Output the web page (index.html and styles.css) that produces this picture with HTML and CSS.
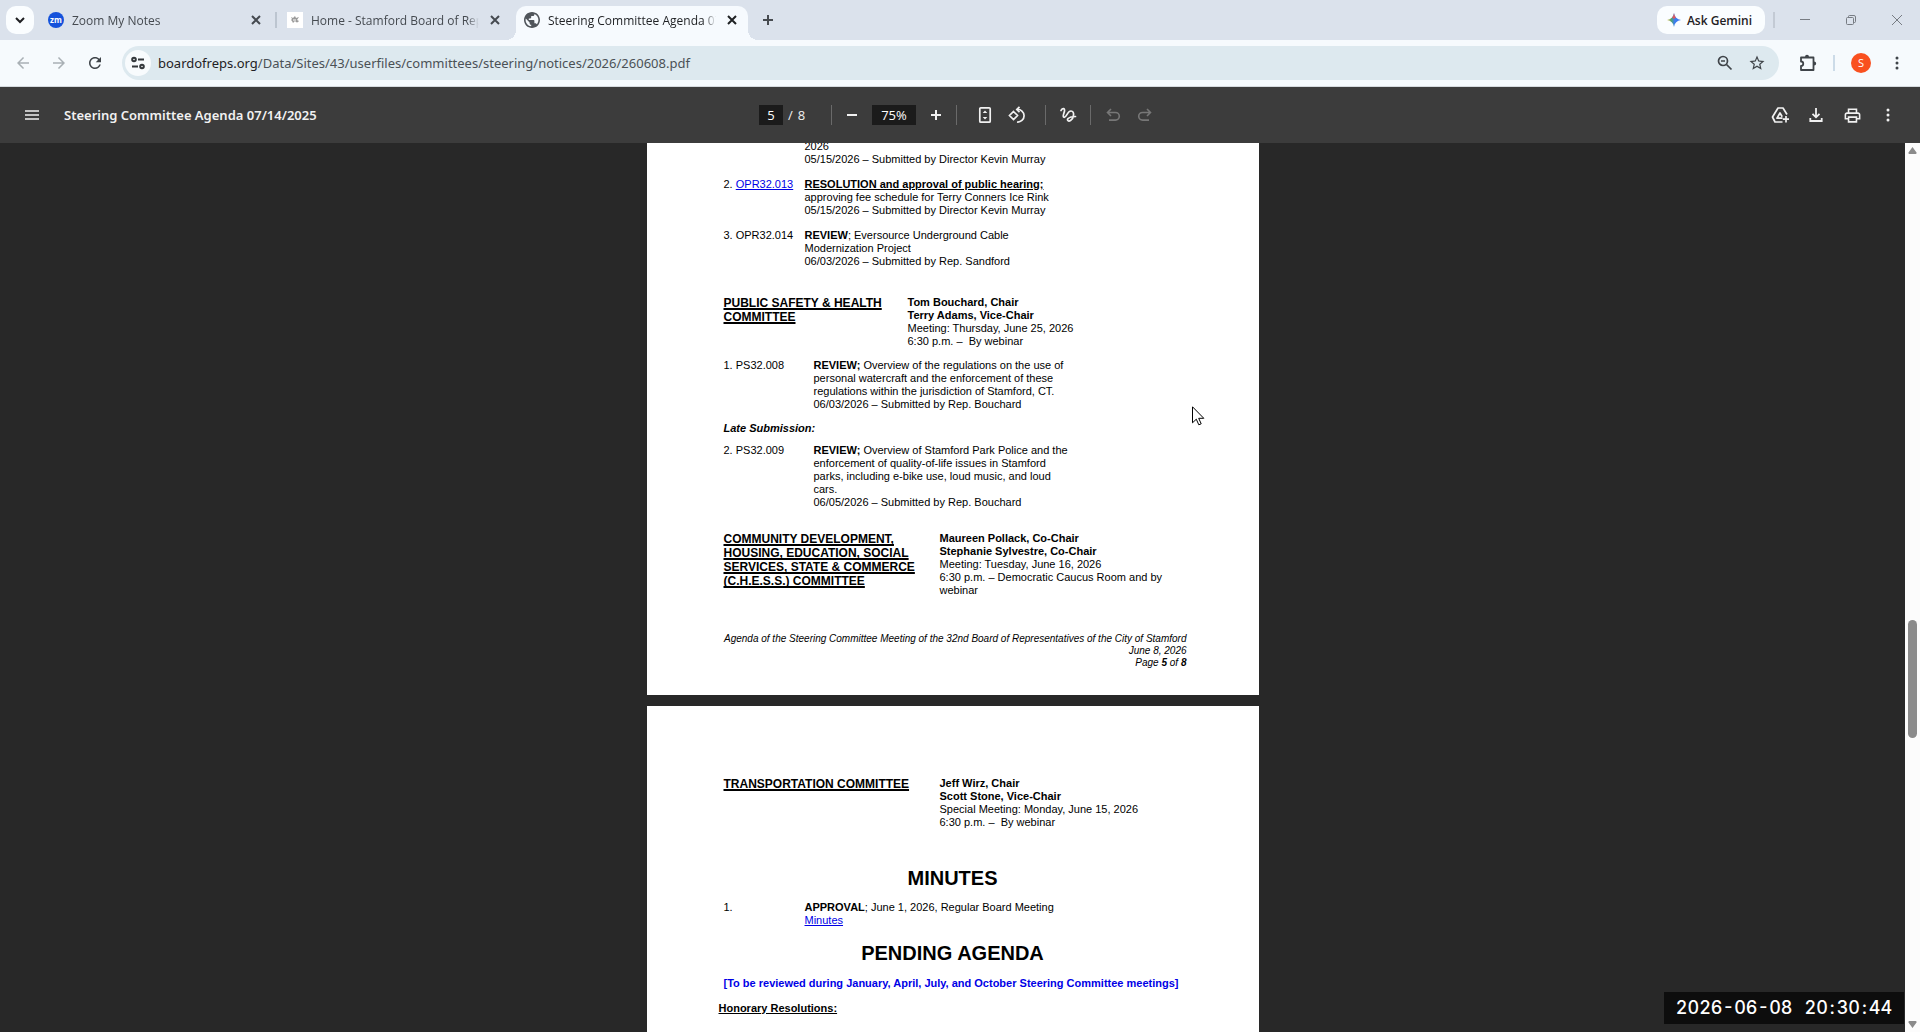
FILE: index.html
```html
<!DOCTYPE html>
<html lang="en">
<head>
<meta charset="utf-8">
<title>Steering Committee Agenda 07/14/2025</title>
<link rel="stylesheet" href="styles.css">
</head>
<body>
<header class="browser">
  <div class="tabstrip">
    <button class="tab-search" aria-label="Search tabs"><svg viewBox="0 0 16 16" width="16" height="16"><path d="M4 6l4 4 4-4" fill="none" stroke="#1f2023" stroke-width="2"/></svg></button>
    <div class="tab">
      <svg class="favicon" viewBox="0 0 16 16" width="16" height="16"><circle cx="8" cy="8" r="8" fill="#1552db"/><text x="8" y="11" text-anchor="middle" class="zm">zm</text></svg>
      <span class="tab-title">Zoom My Notes</span>
      <button class="tab-close" aria-label="Close tab"><svg viewBox="0 0 16 16" width="16" height="16"><path d="M4 4l8 8M12 4l-8 8" stroke="currentColor" stroke-width="2"/></svg></button>
    </div>
    <span class="tab-rule"></span>
    <div class="tab">
      <svg class="favicon" viewBox="0 0 16 16" width="16" height="16"><path d="M0 0h16v16H0z" fill="#fff"/><path d="M4 5l2 1 2-2 1 2 3-1-2 3 2 1-2 2-2-2-2 2-1-2-1-1 1-1z" fill="#9a9a9a"/><path d="M6 8h3M9 11h2" stroke="#fff"/></svg>
      <span class="tab-title">Home - Stamford Board of Representatives</span>
      <button class="tab-close" aria-label="Close tab"><svg viewBox="0 0 16 16" width="16" height="16"><path d="M4 4l8 8M12 4l-8 8" stroke="currentColor" stroke-width="2"/></svg></button>
    </div>
    <div class="tab tab-active">
      <svg class="favicon" viewBox="2 2 20 20" width="16" height="16"><path fill="#50555b" d="M12 2C6.480 2 2 6.480 2 12s4.480 10 10 10 10-4.480 10-10S17.520 2 12 2zm-1 17.930c-3.950-.49-7-3.850-7-7.930 0-.62.08-1.210.21-1.790L9 15v1c0 1.100.9 2 2 2v1.930zm6.900-2.540c-.26-.81-1-1.390-1.900-1.390h-1v-3c0-.55-.45-1-1-1H8v-2h2c.55 0 1-.45 1-1V7h2c1.100 0 2-.9 2-2v-.41c2.930 1.190 5 4.060 5 7.410 0 2.080-.8 3.970-2.100 5.390z"/></svg>
      <span class="tab-title">Steering Committee Agenda 07/14/2025</span>
      <button class="tab-close" aria-label="Close tab"><svg viewBox="0 0 16 16" width="16" height="16"><path d="M4 4l8 8M12 4l-8 8" stroke="currentColor" stroke-width="2"/></svg></button>
    </div>
    <button class="new-tab" aria-label="New tab"><svg viewBox="0 0 16 16" width="16" height="16"><path d="M8 3v10M3 8h10" stroke="#474b50" stroke-width="2"/></svg></button>
    <div class="window-side">
      <button class="gemini"><svg viewBox="0 0 16 16" width="16" height="16"><defs><linearGradient id="spark" x1="0" y1="0" x2="1" y2="0"><stop offset="0" stop-color="#e8b53a"/><stop offset=".3" stop-color="#4fa56c"/><stop offset=".55" stop-color="#3c7df0"/><stop offset="1" stop-color="#3876f2"/></linearGradient></defs><path d="M8 1c.6 4 3 6.400 7 7-4 .6-6.400 3-7 7-.6-4-3-6.400-7-7 4-.6 6.400-3 7-7z" fill="url(#spark)"/><path d="M8 1c.3 2 1 3.500 2 4.600L8 7 6 5.600C7 4.500 7.700 3 8 1z" fill="#db5a62"/></svg>Ask Gemini</button>
      <span class="side-rule"></span>
      <button class="win" aria-label="Minimize"><svg viewBox="0 0 12 12" width="12" height="12"><path d="M1 5.500h10" stroke="#777c83"/></svg></button>
      <button class="win" aria-label="Restore"><svg viewBox="0 0 12 12" width="12" height="12"><rect x="1.500" y="3.500" width="7" height="7" rx="1" fill="none" stroke="#777c83"/><path d="M3.500 3.500v-1a1 1 0 0 1 1-1H9a1.500 1.500 0 0 1 1.500 1.500v4.500a1 1 0 0 1-1 1h-1" fill="none" stroke="#777c83"/></svg></button>
      <button class="win" aria-label="Close"><svg viewBox="0 0 12 12" width="12" height="12"><path d="M1 1l10 10M11 1L1 11" stroke="#777c83"/></svg></button>
    </div>
  </div>
  <div class="navbar">
    <button class="nav nav-off" aria-label="Back"><svg viewBox="0 0 24 24" width="18" height="18"><path fill="currentColor" d="M20 11H7.830l5.590-5.590L12 4l-8 8 8 8 1.410-1.410L7.830 13H20v-2z"/></svg></button>
    <button class="nav nav-off" aria-label="Forward"><svg viewBox="0 0 24 24" width="18" height="18"><path fill="currentColor" d="M4 11h12.170l-5.590-5.590L12 4l8 8-8 8-1.410-1.410L16.170 13H4v-2z"/></svg></button>
    <button class="nav" aria-label="Reload"><svg viewBox="0 0 24 24" width="18" height="18"><path fill="currentColor" d="M17.650 6.350C16.200 4.900 14.210 4 12 4c-4.420 0-7.990 3.580-7.990 8s3.570 8 7.990 8c3.730 0 6.840-2.550 7.730-6h-2.080c-.82 2.330-3.040 4-5.650 4-3.310 0-6-2.690-6-6s2.690-6 6-6c1.660 0 3.140.69 4.220 1.780L13 11h7V4l-2.350 2.350z"/></svg></button>
    <div class="omnibox">
      <button class="site-info" aria-label="Site information"><svg viewBox="0 0 16 16" width="16" height="16" fill="none" stroke="#33373b" stroke-width="2"><circle cx="4" cy="4.500" r="1.800"/><path d="M8 4.500h6M2 11.500h6"/><circle cx="12" cy="11.500" r="1.800"/></svg></button>
      <a class="url" href="#"><span class="host">boardofreps.org</span>/Data/Sites/43/userfiles/committees/steering/notices/2026/260608.pdf</a>
      <button class="nav" aria-label="Zoom level"><svg viewBox="0 0 18 18" width="18" height="18" fill="none" stroke="currentColor" stroke-width="1.700"><circle cx="7" cy="7" r="4.500"/><path d="M10.500 10.500l5 5"/><path d="M5 7h4" stroke-width="1.500"/></svg></button>
      <button class="nav" aria-label="Bookmark this page"><svg viewBox="0 0 24 24" width="18" height="18"><path fill="currentColor" d="M22 9.240l-7.190-.62L12 2 9.190 8.630 2 9.240l5.460 4.730L5.820 21 12 17.270 18.180 21l-1.630-7.030L22 9.240zM12 15.400l-3.760 2.270 1-4.280-3.320-2.880 4.380-.38L12 6.100l1.710 4.040 4.380.38-3.320 2.880 1 4.280L12 15.400z"/></svg></button>
    </div>
    <button class="nav ext" aria-label="Extensions"><svg viewBox="0 0 18 18" width="18" height="18"><path d="M2 3.500h12.500v12.500H2v-4c3 0 3-4.500 0-4.500z" fill="none" stroke="currentColor" stroke-width="1.800" stroke-linejoin="round"/><path d="M6 3a2 2.200 0 0 1 4 0zM15 7.500a2.200 2 0 0 1 0 4z" fill="currentColor"/></svg></button>
    <span class="nav-rule"></span>
    <button class="avatar" aria-label="Profile">S</button>
    <button class="nav" aria-label="Menu"><svg viewBox="0 0 18 18" width="18" height="18" fill="currentColor"><circle cx="9" cy="4" r="1.500"/><circle cx="9" cy="9" r="1.500"/><circle cx="9" cy="14" r="1.500"/></svg></button>
  </div>
</header>

<div class="pdf-bar">
  <div class="bar-left">
    <button class="tool" aria-label="Menu"><svg viewBox="0 0 16 16" width="16" height="16"><path d="M1 4h14M1 8h14M1 12h14" stroke="currentColor" stroke-width="1.400"/></svg></button>
    <h1 class="doc-title">Steering Committee Agenda 07/14/2025</h1>
  </div>
  <div class="bar-mid">
    <div class="pager"><input class="field field-page" aria-label="Page number" value="5"><span>/</span><span>8</span></div>
    <span class="rule rule-page"></span>
    <button class="tool" aria-label="Zoom out"><svg viewBox="0 0 16 16" width="16" height="16"><path d="M3 8h10" stroke="currentColor" stroke-width="2"/></svg></button>
    <input class="field field-zoom" aria-label="Zoom level" value="75%">
    <button class="tool" aria-label="Zoom in"><svg viewBox="0 0 16 16" width="16" height="16"><path d="M3 8h10M8 3v10" stroke="currentColor" stroke-width="2"/></svg></button>
    <span class="rule rule-zoom"></span>
    <button class="tool" aria-label="Fit to page"><svg viewBox="0 0 18 18" width="18" height="18"><rect x="3.800" y="1.800" width="10.400" height="14.400" rx="1" fill="none" stroke="currentColor" stroke-width="1.700"/><path d="M9 4.500l2.300 2.500H6.700zM9 13.500l2.300-2.500H6.700z" fill="currentColor"/></svg></button>
    <button class="tool" aria-label="Rotate"><svg viewBox="0 0 18 18" width="18" height="18" fill="none" stroke="currentColor" stroke-width="1.700"><path d="M5.500 5.500L9.500 9.500l-4 4-4-4zM9 3.500a6.300 6.300 0 1 1 0 12.500"/><path d="M11.500 .8L8.800 3.500l2.700 2.700"/></svg></button>
    <span class="rule rule-rotate"></span>
    <button class="tool" aria-label="Draw"><svg viewBox="0 0 18 18" width="18" height="18" fill="none" stroke="currentColor" stroke-width="1.700" stroke-linecap="round"><path d="M2 4.500C3.500 2 6 2 5.500 5 5 8 3 10.500 5 11.300c2.500.8 3-6.300 7-6.300 4 0 3 7-.5 9.500-2 1.300-4-.2-2.500-1.800 1.700-1.700 4.500-2.200 7.500-2.200"/></svg></button>
    <span class="rule rule-draw"></span>
    <button class="tool tool-off" aria-label="Undo"><svg viewBox="0 0 18 18" width="18" height="18" fill="none" stroke="currentColor" stroke-width="1.600"><path d="M7 3L3.500 6.500 7 10M4 6.500h7.500a3.800 3.800 0 0 1 0 7.600H5"/></svg></button>
    <button class="tool tool-off" aria-label="Redo"><svg viewBox="0 0 18 18" width="18" height="18" fill="none" stroke="currentColor" stroke-width="1.600"><path d="M11 3l3.500 3.500L11 10M14 6.500H6.500a3.800 3.800 0 0 0 0 7.600H13"/></svg></button>
  </div>
  <div class="bar-right">
    <button class="tool" aria-label="Save to Drive"><svg viewBox="0 0 18 18" width="18" height="18" fill="none" stroke="currentColor" stroke-width="1.700" stroke-linejoin="round"><path d="M16 8.500L12 2H7L1.500 11 4 16h7.500"/><path d="M11.500 12.200H6L9 7l2.200 3.800"/><path d="M15 10v6.500M11.800 13.200h6.200"/></svg></button>
    <button class="tool" aria-label="Download"><svg viewBox="0 0 16 16" width="16" height="16" fill="none" stroke="currentColor" stroke-width="1.800"><path d="M8 1v9M4.500 6.800L8 10.300l3.500-3.500M2.300 11v3h11.400v-3"/></svg></button>
    <button class="tool" aria-label="Print"><svg viewBox="0 0 24 24" width="19" height="19"><path fill="currentColor" d="M19 8h-1V3H6v5H5c-1.660 0-3 1.340-3 3v6h4v4h12v-4h4v-6c0-1.660-1.340-3-3-3zM8 5h8v3H8V5zm8 12v2H8v-4h8v2zm2-2v-2H6v2H4v-4c0-.55.45-1 1-1h14c.55 0 1 .45 1 1v4h-2z"/></svg></button>
    <button class="tool" aria-label="More actions"><svg viewBox="0 0 18 18" width="18" height="18" fill="currentColor"><circle cx="9" cy="4" r="1.500"/><circle cx="9" cy="9" r="1.500"/><circle cx="9" cy="14" r="1.500"/></svg></button>
  </div>
</div>

<div class="viewer">
  <main class="pages">
    <article class="page page-five">
      <div class="item item-first"><span></span><p>2026<br>05/15/2026 – Submitted by Director Kevin Murray</p></div>
      <div class="item"><span>2. <a class="link" href="#">OPR32.013</a></span><p><b class="under">RESOLUTION and approval of public hearing;</b> approving fee schedule for Terry Conners Ice Rink<br>05/15/2026 – Submitted by Director Kevin Murray</p></div>
      <div class="item"><span>3. OPR32.014</span><p><b>REVIEW</b>; Eversource Underground Cable Modernization Project<br>06/03/2026 – Submitted by Rep. Sandford</p></div>

      <section class="committee committee-safety">
        <h2>PUBLIC SAFETY &amp; HEALTH COMMITTEE</h2>
        <p><b>Tom Bouchard, Chair<br>Terry Adams, Vice-Chair</b><br>Meeting: Thursday, June 25, 2026<br>6:30 p.m. –&nbsp; By webinar</p>
      </section>
      <div class="item item-wide"><span>1. PS32.008</span><p><b>REVIEW;</b> Overview of the regulations on the use of personal watercraft and the enforcement of these regulations within the jurisdiction of Stamford, CT.<br>06/03/2026 – Submitted by Rep. Bouchard</p></div>
      <h3 class="late">Late Submission:</h3>
      <div class="item item-wide item-late"><span>2. PS32.009</span><p><b>REVIEW;</b> Overview of Stamford Park Police and the enforcement of quality-of-life issues in Stamford parks, including e-bike use, loud music, and loud cars.<br>06/05/2026 – Submitted by Rep. Bouchard</p></div>

      <section class="committee committee-chess">
        <h2>COMMUNITY DEVELOPMENT, HOUSING, EDUCATION, SOCIAL SERVICES, STATE &amp; COMMERCE (C.H.E.S.S.) COMMITTEE</h2>
        <p><b>Maureen Pollack, Co-Chair<br>Stephanie Sylvestre, Co-Chair</b><br>Meeting: Tuesday, June 16, 2026<br>6:30 p.m. – Democratic Caucus Room and by webinar</p>
      </section>
      <footer class="page-foot">Agenda of the Steering Committee Meeting of the 32nd Board of Representatives of the City of Stamford<br>June 8, 2026<br>Page <b>5</b> of <b>8</b></footer>
    </article>

    <article class="page page-six">
      <section class="committee">
        <h2>TRANSPORTATION COMMITTEE</h2>
        <p><b>Jeff Wirz, Chair<br>Scott Stone, Vice-Chair</b><br>Special Meeting: Monday, June 15, 2026<br>6:30 p.m. –&nbsp; By webinar</p>
      </section>
      <h2 class="title title-minutes">MINUTES</h2>
      <div class="item item-minutes"><span>1.</span><p><b>APPROVAL</b>; June 1, 2026, Regular Board Meeting <a class="link" href="#">Minutes</a></p></div>
      <h2 class="title title-pending">PENDING AGENDA</h2>
      <p class="notice">[To be reviewed during January, April, July, and October Steering Committee meetings]</p>
      <h3 class="honorary">Honorary Resolutions:</h3>
    </article>
  </main>
  <div class="scrollbar">
    <svg viewBox="0 0 15 15" width="15" height="15"><path d="M7.500 4L11.500 9.500a1 1 0 0 1-1 1.500h-6a1 1 0 0 1-1-1.500z" fill="#8b8b8b"/></svg>
    <div class="track"><span class="thumb"></span></div>
    <svg viewBox="0 0 15 15" width="15" height="15"><path d="M7.500 11L11.500 5.500a1 1 0 0 0-1-1.500h-6a1 1 0 0 0-1 1.500z" fill="#8b8b8b"/></svg>
  </div>
</div>

<svg class="pointer" viewBox="0 0 13 20" width="13" height="20"><path d="M.5 .8v16l3.800-3.600 2.500 5.600 2.400-1-2.500-5.500h5.100z" fill="#fff" stroke="#000"/></svg>
<time class="stamp"><span>2026-06-08</span><span>20<i>:</i>30<i>:</i>44</span></time>
</body>
</html>
```
FILE: styles.css
```css
* { box-sizing: border-box; }
html, body { height: 100%; }
body {
  margin: 0;
  display: flex;
  flex-direction: column;
  overflow: hidden;
  background: #282828;
  font-family: "Open Sans", "Noto Sans", sans-serif;
  font-size: 12px;
}
h1, h2, h3, p { margin: 0; font-size: inherit; }
button {
  display: flex;
  align-items: center;
  justify-content: center;
  flex: none;
  padding: 0;
  border: 0;
  background: none;
  color: inherit;
  font: inherit;
}

/* Tab strip */
.tabstrip {
  display: flex;
  align-items: center;
  height: 40px;
  padding: 6px 0 0 6px;
  background: #dbe2ec;
  color: #454a50;
}
.tab-search {
  width: 28px;
  height: 28px;
  margin: 0 6px 6px 0;
  border-radius: 10px;
  background: #fafdff;
}
.tab {
  display: flex;
  align-items: center;
  width: 232px;
  height: 34px;
  padding: 0 8px 6px;
}
.favicon { flex: none; }
.zm { font: bold 8px "Open Sans", sans-serif; fill: #fff; }
.tab-title {
  flex: 1;
  margin-left: 8px;
  overflow: hidden;
  white-space: nowrap;
  mask-image: linear-gradient(to left, transparent, #000 12px);
}
.tab-close { width: 16px; height: 16px; margin-left: 8px; }
.tab-rule { width: 2px; height: 16px; margin: 0 2px 6px 3px; background: #bcc5d0; }
.tab-active {
  position: relative;
  margin-left: 5px;
  border-radius: 10px 10px 0 0;
  background: #f6fafe;
  color: #1f2124;
}
.tab-active::before, .tab-active::after {
  content: "";
  position: absolute;
  bottom: 0;
  width: 10px;
  height: 10px;
}
.tab-active::before { right: 100%; background: radial-gradient(circle at 0 0, transparent 10px, #f6fafe 10px); }
.tab-active::after { left: 100%; background: radial-gradient(circle at 100% 0, transparent 10px, #f6fafe 10px); }
.new-tab { width: 28px; height: 28px; margin: 0 0 6px 6px; }
.window-side {
  display: flex;
  align-items: center;
  margin-left: auto;
  padding-bottom: 6px;
}
.gemini {
  gap: 5px;
  width: 108px;
  height: 28px;
  padding-right: 4px;
  border-radius: 10px;
  background: #fafdff;
  color: #1f2124;
  font-weight: 600;
}
.side-rule { width: 2px; height: 16px; margin: 0 7px 0 8px; background: #c3cad4; }
.win { width: 46px; height: 28px; }

/* Address row */
.navbar {
  display: flex;
  align-items: center;
  height: 47px;
  padding: 0 7px 1px 7px;
  border-bottom: 1px solid #d5dade;
  background: #f6fafd;
  color: #3f4449;
}
.nav { width: 32px; height: 32px; }
.navbar > .nav { margin-right: 4px; }
.navbar > .nav:last-child { margin: 0 0 0 10px; }
.nav-off { color: #a9b0b5; }
.omnibox {
  display: flex;
  align-items: center;
  flex: 1;
  height: 34px;
  margin-left: 7px;
  padding: 0 6px 0 3px;
  border-radius: 17px;
  background: #dde9ef;
}
.site-info { width: 26px; height: 26px; border-radius: 13px; background: #f8fbfd; }
.url {
  flex: 1;
  margin-left: 7px;
  color: #4b5156;
  font-family: "Noto Sans", sans-serif;
  font-size: 13px;
  text-decoration: none;
  white-space: nowrap;
}
.host { color: #1f2124; }
.navbar > .ext { margin: 0 9px 0 13px; }
.nav-rule { width: 2px; height: 16px; background: #ccdbe8; }
.avatar {
  width: 20px;
  height: 20px;
  margin-left: 16px;
  border-radius: 10px;
  background: #f9501f;
  color: #fff;
  font-size: 11px;
}

/* PDF toolbar */
.pdf-bar {
  display: grid;
  grid-template-columns: 1fr auto 1fr;
  align-items: center;
  flex: none;
  height: 56px;
  padding: 0 16px;
  background: #3c3c3c;
  color: #f1f1f1;
}
.bar-left, .bar-mid, .bar-right, .pager { display: flex; align-items: center; }
.bar-right { justify-content: flex-end; gap: 4px; }
.tool { width: 32px; height: 32px; }
.tool-off { color: #777; }
.doc-title { margin-left: 16px; font: 600 13px "Noto Sans", sans-serif; }
.pager { width: 56px; gap: 5px; font-size: 13px; }
.field {
  height: 20px;
  padding: 0;
  border: 0;
  background: #1b1b1b;
  color: #fff;
  font: 13px "Open Sans", sans-serif;
  text-align: center;
}
.field-page { width: 24px; }
.field-zoom { width: 44px; margin: 0 4px; }
.rule { width: 1px; height: 20px; background: #6a6a6a; }
.rule-page { margin: 0 4px 0 16px; }
.rule-zoom { margin: 0 12px 0 4px; }
.rule-rotate { margin: 0 6px 0 12px; }
.rule-draw { margin: 0 6px; }

/* Document */
.viewer { display: flex; flex: 1; min-height: 0; }
.pages {
  display: flex;
  flex-direction: column;
  align-items: center;
  gap: 11px;
  flex: 1;
  overflow: hidden;
}
.page {
  flex: none;
  width: 612px;
  padding: 0 72px 0 77px;
  background: #fff;
  color: #000;
  font: 11px/13px "Liberation Sans", Arial, sans-serif;
}
.page-five { padding-bottom: 26px; }
.page-six { min-height: 792px; padding-top: 71px; }
.item {
  display: grid;
  grid-template-columns: 81px 260px;
  margin-top: 12px;
}
.item-first { margin-top: -3px; }
.item-wide { grid-template-columns: 90px 260px; }
.item-late { margin-top: 9px; }
.item-minutes { margin-top: 11px; }
.link { color: #0000e6; }
.under { text-decoration: underline; }
.late { margin-top: 11px; font-style: italic; }
.committee {
  display: grid;
  grid-template-columns: 200px 1fr;
  column-gap: 16px;
}
.committee h2 {
  font-size: 12px;
  line-height: 14px;
  text-decoration: underline 2px;
  text-underline-offset: 1px;
  text-decoration-skip-ink: none;
}
.committee-safety { grid-template-columns: 168px 1fr; margin-top: 28px; }
.committee-safety + .item { margin-top: 11px; }
.committee-chess { margin-top: 23px; }
.page-foot {
  margin-top: 36px;
  font-size: 10px;
  font-style: italic;
  line-height: 12px;
  text-align: right;
}
.title { margin-left: -5px; font-size: 20px; line-height: 24px; text-align: center; }
.title-minutes { margin-top: 37px; }
.title-pending { margin-top: 14px; }
.notice { margin-top: 12px; color: #0000e6; font-weight: bold; white-space: nowrap; }
.honorary { margin: 12px 0 0 -5px; text-decoration: underline; }

/* Scrollbar */
.scrollbar {
  display: flex;
  flex-direction: column;
  flex: none;
  width: 15px;
  background: #fcfcfc;
}
.scrollbar svg { flex: none; }
.track { display: flex; flex: 1; flex-direction: column; align-items: center; }
.track::before { content: ""; height: 54%; }
.thumb { width: 9px; height: 118px; margin-top: -2px; border-radius: 5px; background: #8b8b8b; }

/* Overlays */
.pointer { position: absolute; left: 1192px; top: 406px; }
.stamp {
  position: absolute;
  right: 16px;
  bottom: 8px;
  display: flex;
  justify-content: center;
  gap: 12px;
  width: 240px;
  height: 32px;
  background: #0d0d0d;
  color: #fff;
  font: 500 18px/32px Inter, sans-serif;
  font-feature-settings: "tnum";
}
.stamp i { padding: 0 2px; font-style: normal; }
```
